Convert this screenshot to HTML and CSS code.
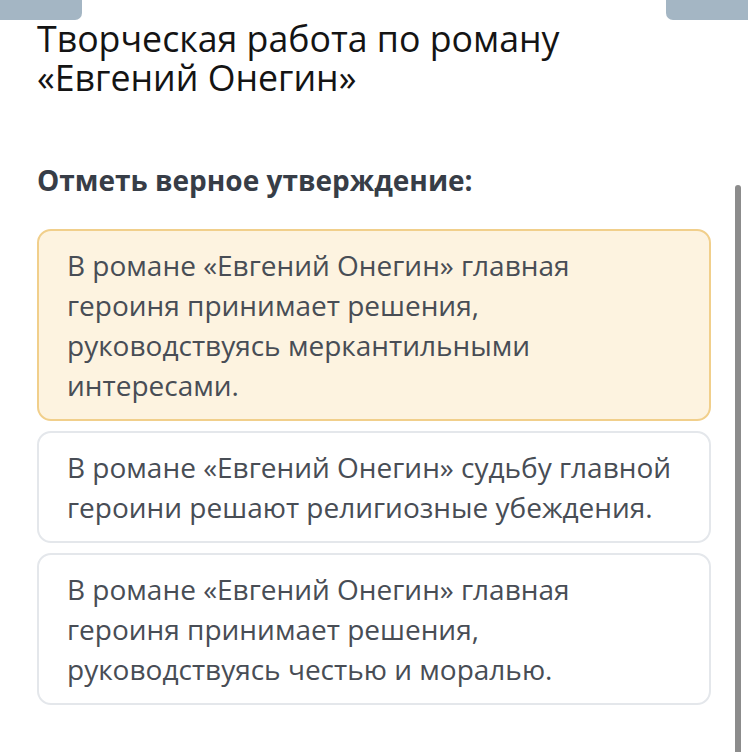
FILE: index.html
```html
<!DOCTYPE html>
<html lang="ru">
<head>
  <meta charset="UTF-8">
  <meta name="viewport" content="width=device-width, initial-scale=1">
  <title>Творческая работа по роману «Евгений Онегин»</title>
  <link rel="stylesheet" href="styles.css">
</head>
<body>
  <div class="tabs">
    <div class="tab tab-left"></div>
    <div class="tab tab-right"></div>
  </div>

  <div class="container">
    <h1>Творческая работа по роману «Евгений Онегин»</h1>

    <h2>Отметь верное утверждение:</h2>

    <div class="options">
      <div class="option selected">В романе «Евгений Онегин» главная героиня принимает решения, руководствуясь меркантильными интересами.</div>
      <div class="option">В романе «Евгений Онегин» судьбу главной героини решают религиозные убеждения.</div>
      <div class="option">В романе «Евгений Онегин» главная героиня принимает решения, руководствуясь честью и моралью.</div>
    </div>
  </div>

  <div class="scrollbar"></div>
</body>
</html>
```

FILE: styles.css
```css
body {
  margin: 0;
  background: #fff;
  font-family: "Open Sans", "Noto Sans", sans-serif;
  overflow: hidden;
}
.tabs {
  display: flex;
  justify-content: space-between;
  height: 20px;
}
.tab {
  width: 82px;
  height: 20px;
  background: #a4b6c4;
}
.tab-left {
  border-bottom-right-radius: 7px;
}
.tab-right {
  border-bottom-left-radius: 7px;
}
.container {
  padding: 0 37px;
}
h1 {
  margin: -1px 0 0;
  max-width: 600px;
  font-size: 35.7px;
  line-height: 39px;
  font-weight: 400;
  color: #141414;
}
h2 {
  margin: 65px 0 0;
  font-size: 28px;
  line-height: 36px;
  font-weight: 700;
  color: #373d47;
}
.options {
  margin-top: 31px;
  display: flex;
  flex-direction: column;
  gap: 10px;
}
.option {
  padding: 14px 20px 14px 28px;
  border: 2px solid #e4e7eb;
  border-radius: 14px;
  background: #fff;
  font-size: 28px;
  line-height: 40px;
  color: #484d55;
}
.option.selected {
  background: #fdf3e0;
  border-color: #f1cf8b;
}
.scrollbar {
  position: absolute;
  left: 735px;
  top: 185px;
  width: 6px;
  height: 580px;
  background: #8c8c8c;
  border-radius: 3px;
}
```
